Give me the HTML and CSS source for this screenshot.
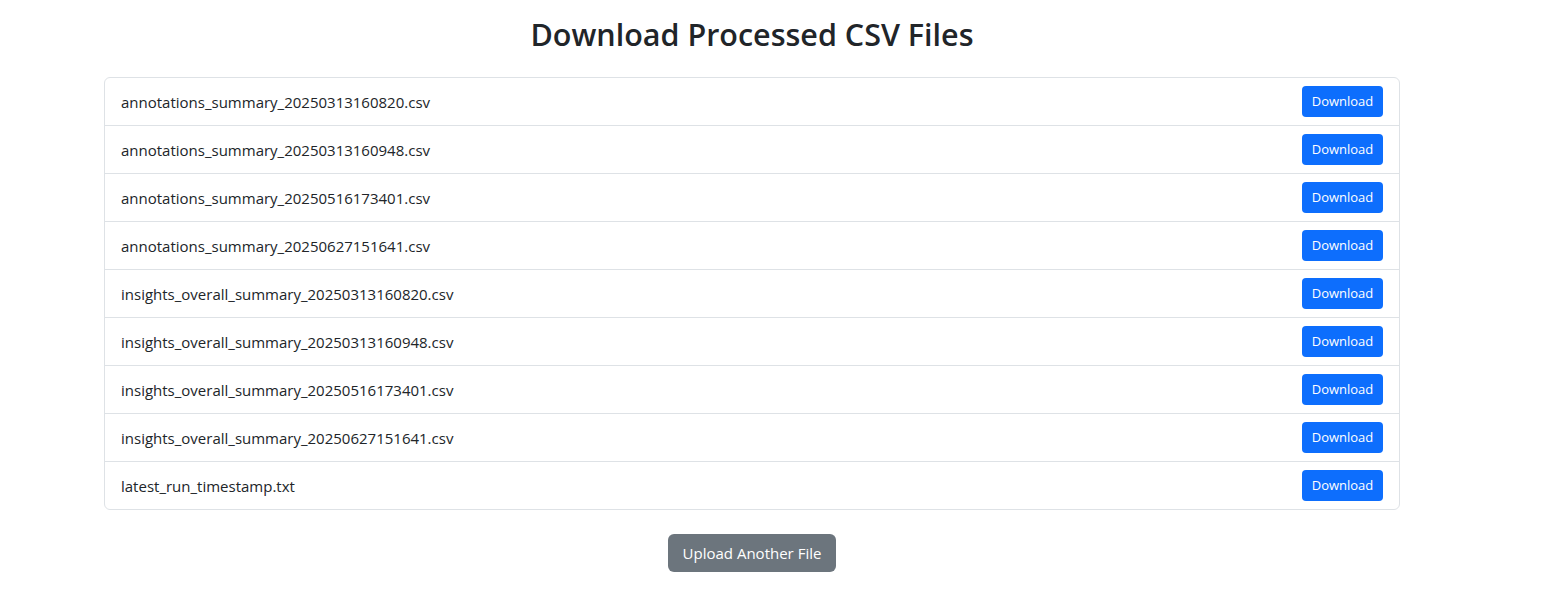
FILE: index.html
```html
<!DOCTYPE html>
<html lang="en">
<head>
<meta charset="utf-8">
<title>Download Processed CSV Files</title>
<link rel="stylesheet" href="styles.css">
</head>
<body>
<main class="container">
  <h2 class="title">Download Processed CSV Files</h2>
  <ul class="file-list">
    <li class="file-item"><span class="file-name">annotations_summary_20250313160820.csv</span><a class="btn-download" href="#">Download</a></li>
    <li class="file-item"><span class="file-name">annotations_summary_20250313160948.csv</span><a class="btn-download" href="#">Download</a></li>
    <li class="file-item"><span class="file-name">annotations_summary_20250516173401.csv</span><a class="btn-download" href="#">Download</a></li>
    <li class="file-item"><span class="file-name">annotations_summary_20250627151641.csv</span><a class="btn-download" href="#">Download</a></li>
    <li class="file-item"><span class="file-name">insights_overall_summary_20250313160820.csv</span><a class="btn-download" href="#">Download</a></li>
    <li class="file-item"><span class="file-name">insights_overall_summary_20250313160948.csv</span><a class="btn-download" href="#">Download</a></li>
    <li class="file-item"><span class="file-name">insights_overall_summary_20250516173401.csv</span><a class="btn-download" href="#">Download</a></li>
    <li class="file-item"><span class="file-name">insights_overall_summary_20250627151641.csv</span><a class="btn-download" href="#">Download</a></li>
    <li class="file-item"><span class="file-name">latest_run_timestamp.txt</span><a class="btn-download" href="#">Download</a></li>
  </ul>
  <div class="actions">
    <a class="btn-upload" href="#">Upload Another File</a>
  </div>
</main>
</body>
</html>
```

FILE: styles.css
```css
* { box-sizing: border-box; }

html, body {
  margin: 0;
  background: #fff;
}

body {
  padding-right: 40px;
  font-family: "Open Sans", "Noto Sans", "Liberation Sans", sans-serif;
  font-size: 16px;
  line-height: 1.5;
  color: #212529;
}

.container {
  max-width: 1320px;
  margin: 0 auto;
  padding: 16px 12px 0;
}

.title {
  margin: 0 0 24px;
  font-size: 30.5px;
  font-weight: 600;
  line-height: 37px;
  text-align: center;
  color: #212529;
}

.file-list {
  list-style: none;
  margin: 0;
  padding: 0;
  border: 1px solid #dee2e6;
  border-radius: 6px;
}

.file-item {
  display: flex;
  align-items: center;
  justify-content: space-between;
  padding: 8px 16px;
  height: 48px;
  border-bottom: 1px solid #dee2e6;
}

.file-item:last-child {
  border-bottom: 0;
  height: 47px;
}

.file-name {
  font-size: 15px;
  padding-top: 1px;
}

.btn-download {
  display: inline-flex;
  align-items: center;
  justify-content: center;
  width: 81px;
  height: 31px;
  background: #0d6efd;
  color: #fff;
  font-size: 13px;
  text-decoration: none;
  border-radius: 4px;
}

.actions {
  display: flex;
  justify-content: center;
  margin-top: 24px;
}

.btn-upload {
  display: inline-flex;
  align-items: center;
  justify-content: center;
  width: 168px;
  height: 38px;
  background: #6c757d;
  color: #fff;
  font-size: 15px;
  text-decoration: none;
  border-radius: 6px;
}
```
